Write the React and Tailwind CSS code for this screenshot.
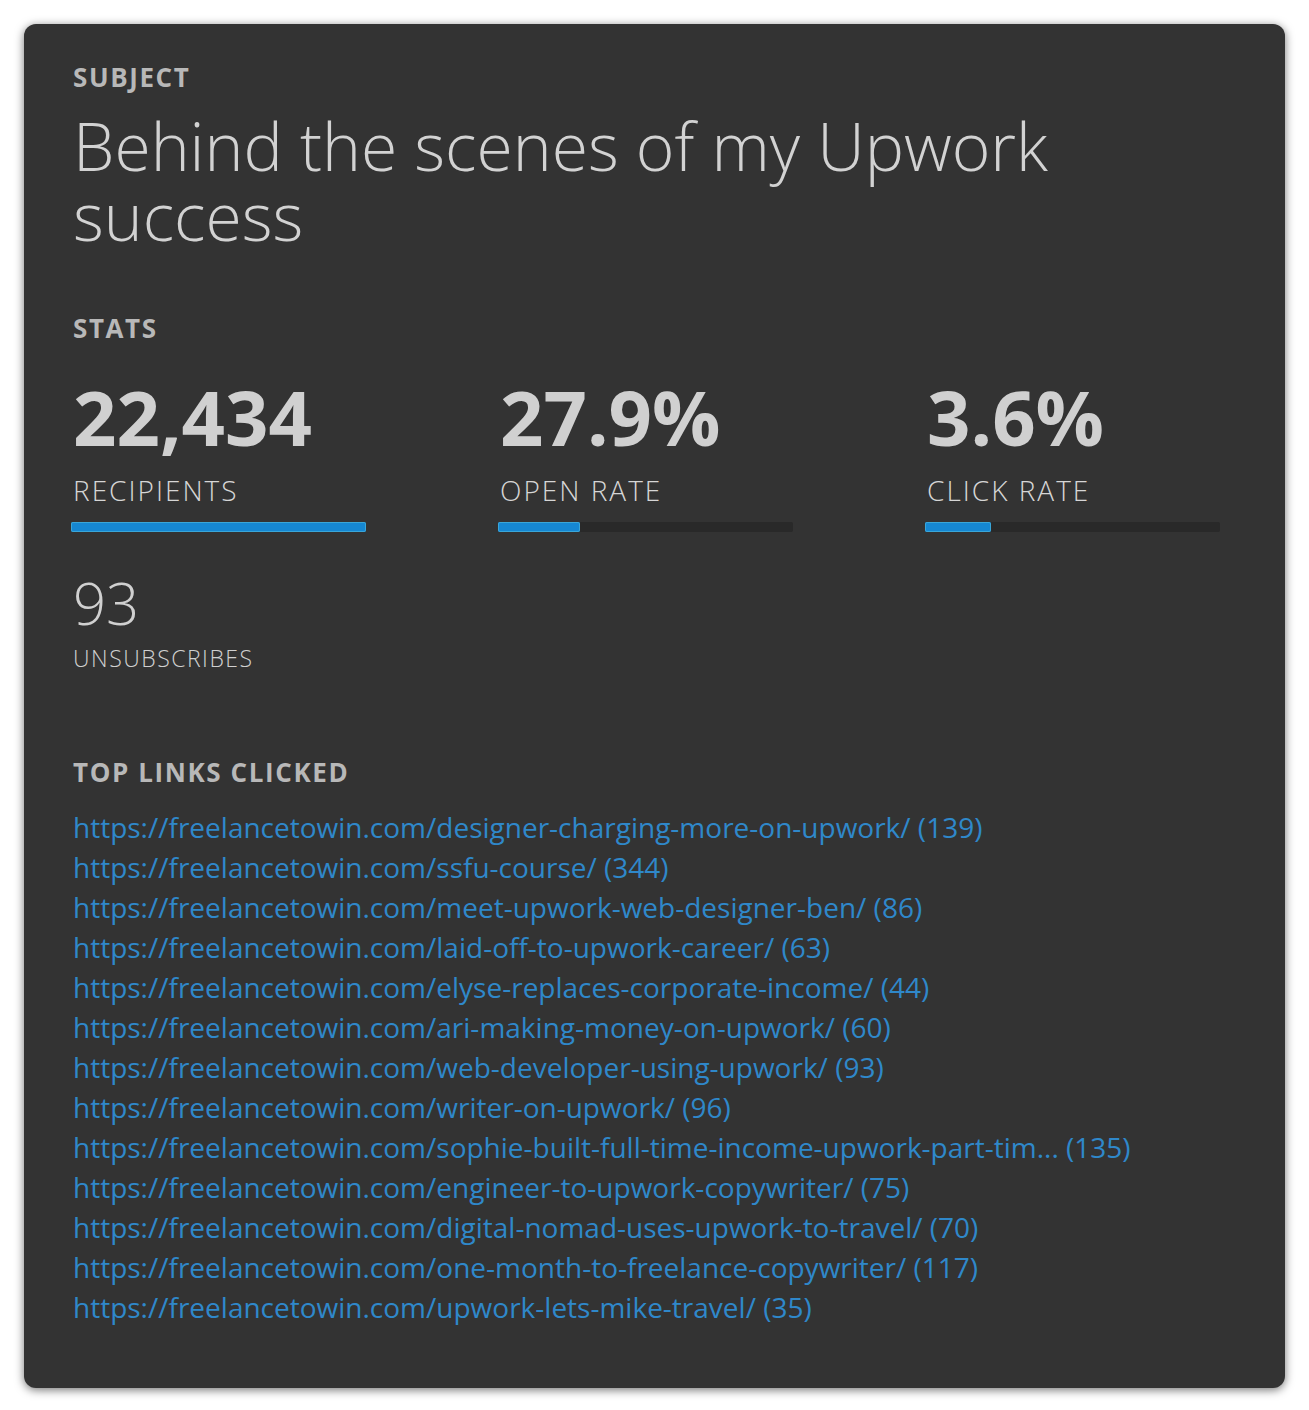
const stats = [
  { value: "22,434", label: "RECIPIENTS", pct: 100 },
  { value: "27.9%", label: "OPEN RATE", pct: 27.9 },
  { value: "3.6%", label: "CLICK RATE", pct: 22.5 },
]

const links = [
  ["https://freelancetowin.com/designer-charging-more-on-upwork/", 139],
  ["https://freelancetowin.com/ssfu-course/", 344],
  ["https://freelancetowin.com/meet-upwork-web-designer-ben/", 86],
  ["https://freelancetowin.com/laid-off-to-upwork-career/", 63],
  ["https://freelancetowin.com/elyse-replaces-corporate-income/", 44],
  ["https://freelancetowin.com/ari-making-money-on-upwork/", 60],
  ["https://freelancetowin.com/web-developer-using-upwork/", 93],
  ["https://freelancetowin.com/writer-on-upwork/", 96],
  ["https://freelancetowin.com/sophie-built-full-time-income-upwork-part-tim...", 135],
  ["https://freelancetowin.com/engineer-to-upwork-copywriter/", 75],
  ["https://freelancetowin.com/digital-nomad-uses-upwork-to-travel/", 70],
  ["https://freelancetowin.com/one-month-to-freelance-copywriter/", 117],
  ["https://freelancetowin.com/upwork-lets-mike-travel/", 35],
]

function SectionLabel({ children, className = "" }) {
  return (
    <h3 className={`text-[26px] leading-[32px] font-bold tracking-[1.6px] text-[#b8b8b8] ${className}`}>
      {children}
    </h3>
  )
}

export default function App() {
  return (
    <div className="min-h-screen bg-white p-6" style={{ fontFamily: '"Open Sans", "Noto Sans", sans-serif' }}>
      <div className="w-[1261px] rounded-xl bg-[#333333] px-[49px] pt-[37px] pb-[61px] shadow-[0_2px_10px_rgba(0,0,0,0.55)]">
        <SectionLabel>SUBJECT</SectionLabel>
        <h1 className="mt-[17px] text-[66px] leading-[70px] font-light text-[#d2d2d2]">
          Behind the scenes of my Upwork success
        </h1>

        <SectionLabel className="mt-[62px]">STATS</SectionLabel>
        <div className="mt-[35px] flex">
          {stats.map((s) => (
            <div key={s.label} className="w-[427px] shrink-0">
              <div className="text-[76px] leading-[76px] font-bold text-[#d0d0d0]">{s.value}</div>
              <div className="mt-[19px] text-[28px] leading-[32px] font-light tracking-[2px] text-[#d6d6d6]">{s.label}</div>
              <div className="mt-[16px] -ml-[2px] h-[10px] w-[295px] rounded-[2px] bg-[#292929]">
                <div
                  className="h-full rounded-[2px] bg-[#1587d2] shadow-[inset_0_0_0_1px_#3aa6d8]"
                  style={{ width: `${s.pct}%` }}
                />
              </div>
            </div>
          ))}
        </div>

        <div className="mt-[42px] text-[58px] leading-[58px] font-light text-[#d0d0d0]">93</div>
        <div className="mt-[12px] text-[23px] leading-[28px] font-light tracking-[1.5px] text-[#d0d0d0]">UNSUBSCRIBES</div>

        <SectionLabel className="mt-[84px]">TOP LINKS CLICKED</SectionLabel>
        <ul className="mt-[19px]">
          {links.map(([url, count]) => (
            <li key={url} className="text-[28px] leading-[40px] text-[#2f88ca]">
              <a href="#">{url} ({count})</a>
            </li>
          ))}
        </ul>
      </div>
    </div>
  )
}
